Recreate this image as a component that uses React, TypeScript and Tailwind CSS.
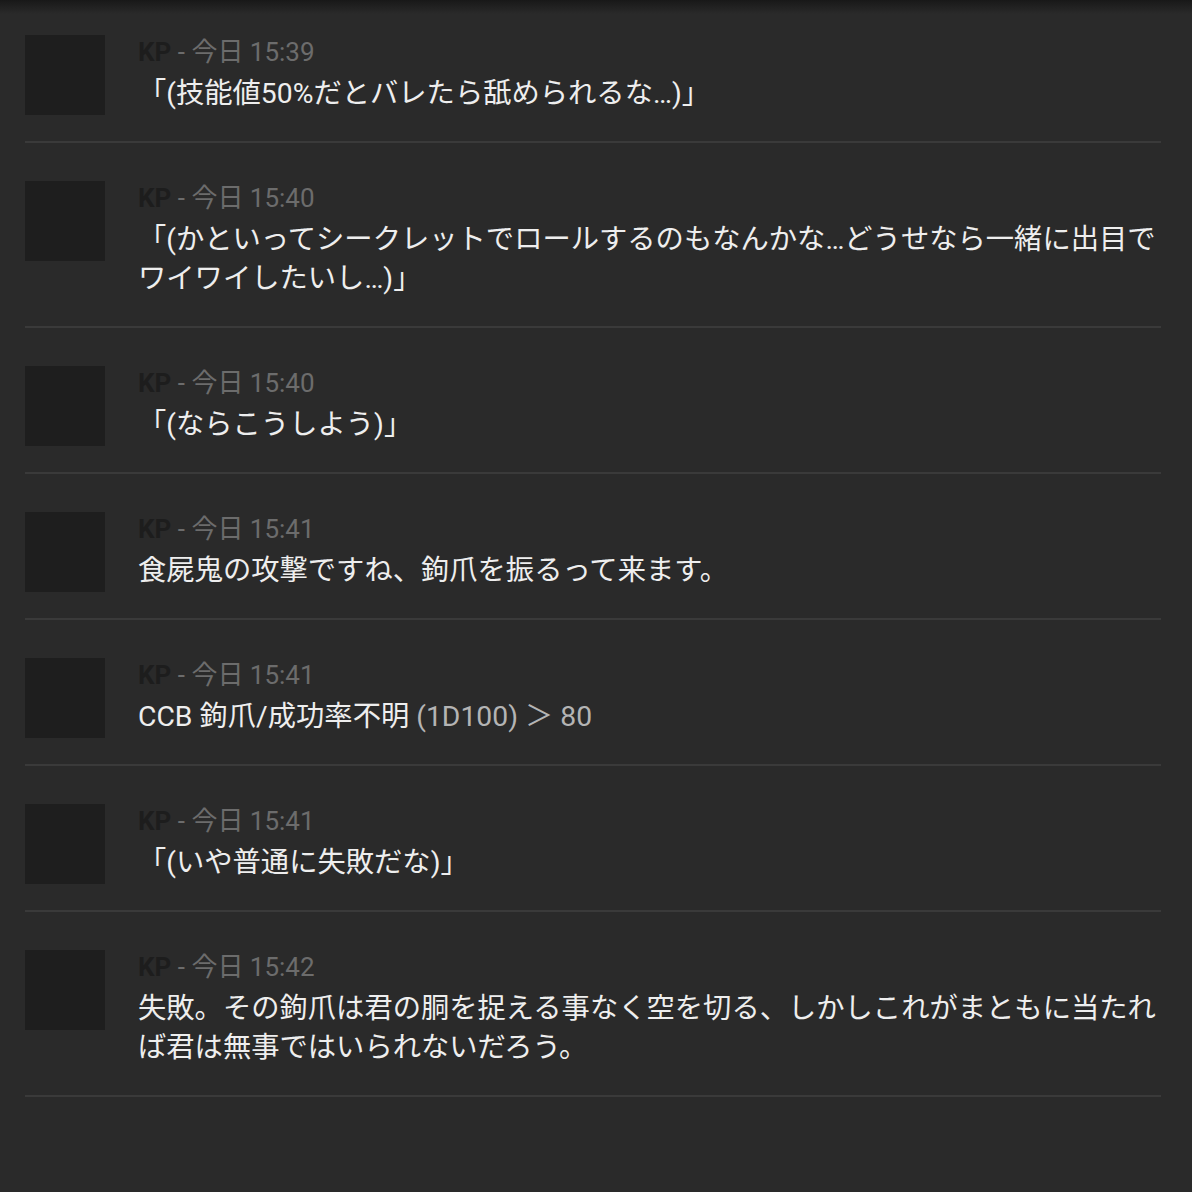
type Part = { text: string; dim?: boolean };
type Message = { time: string; parts: Part[] };

const messages: Message[] = [
  { time: "15:39", parts: [{ text: "「(技能値50%だとバレたら舐められるな…)」" }] },
  {
    time: "15:40",
    parts: [
      {
        text: "「(かといってシークレットでロールするのもなんかな…どうせなら一緒に出目でワイワイしたいし…)」",
      },
    ],
  },
  { time: "15:40", parts: [{ text: "「(ならこうしよう)」" }] },
  { time: "15:41", parts: [{ text: "食屍鬼の攻撃ですね、鉤爪を振るって来ます。" }] },
  {
    time: "15:41",
    parts: [{ text: "CCB 鉤爪/成功率不明 " }, { text: "(1D100) ＞ 80", dim: true }],
  },
  { time: "15:41", parts: [{ text: "「(いや普通に失敗だな)」" }] },
  {
    time: "15:42",
    parts: [
      {
        text: "失敗。その鉤爪は君の胴を捉える事なく空を切る、しかしこれがまともに当たれば君は無事ではいられないだろう。",
      },
    ],
  },
];

// Chat log — dark ground, square placeholder avatars, a faint name + time
// header above each message, hairline separators between entries.
export default function App() {
  return (
    <div
      className="relative min-h-[1192px] w-[1192px] bg-[#2a2a2a] pl-[25px] pr-[31px] pt-[35px]"
      style={{ fontFamily: 'Roboto, "Noto Sans CJK JP", sans-serif' }}
    >
      {/* top edge shadow */}
      <div className="pointer-events-none absolute inset-x-0 top-0 h-[14px] bg-gradient-to-b from-[#181818] to-transparent" />

      <ul>
        {messages.map((m, i) => (
          <li
            key={i}
            className={`flex gap-[33px] border-b-2 border-[#3a3a3a] pb-[25px] ${
              i === 0 ? "" : "pt-[38px]"
            }`}
          >
            <div className="h-[80px] w-[80px] shrink-0 bg-[#1e1e1e]" />
            <div className="min-w-0 flex-1 pb-[3px]">
              <p className="text-[26px] leading-[35px] text-[#6c6c6c]">
                <span className="font-bold text-[#1d1d1d]">KP</span> - 今日 {m.time}
              </p>
              <p className="mt-[4px] text-[28.3px] leading-[39px] text-[#eeeeee]">
                {m.parts.map((p, j) => (
                  <span key={j} className={p.dim ? "text-[#b4b4b4]" : ""}>
                    {p.text}
                  </span>
                ))}
              </p>
            </div>
          </li>
        ))}
      </ul>
    </div>
  );
}
